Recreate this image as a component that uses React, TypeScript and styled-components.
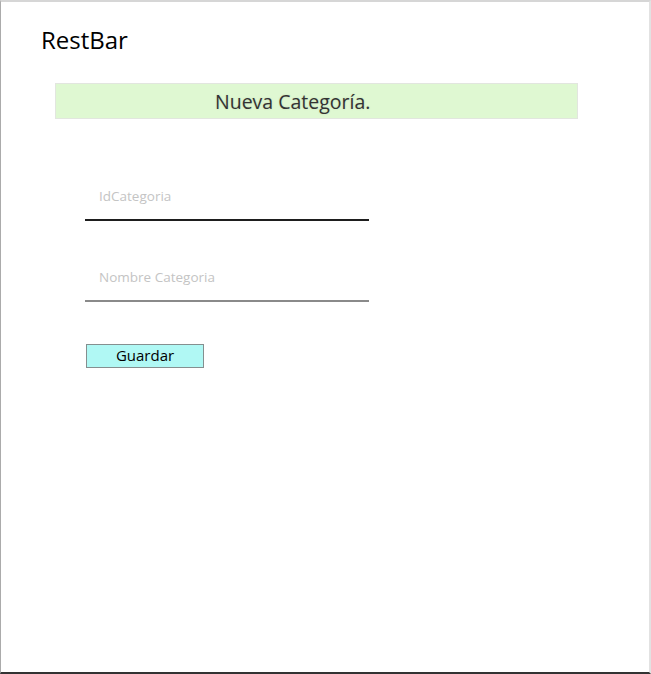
import React from 'react'
import styled, { createGlobalStyle } from 'styled-components'

const GlobalStyle = createGlobalStyle`
   html, body {
      margin: 0;
      padding: 0;
      background: #ffffff;
   }
   * {
      box-sizing: border-box;
   }
`

const fontStack = `'Open Sans', 'Noto Sans', 'Liberation Sans', sans-serif`

export default function App() {
   return (
      <>
         <GlobalStyle />
         <Frame>
            <Title>RestBar</Title>
            <Banner>
               <BannerText>Nueva Categoría.</BannerText>
            </Banner>
            <Form onSubmit={e => e.preventDefault()}>
               <Field placeholder="IdCategoria" $line="#1e1e1e" />
               <Field placeholder="Nombre Categoria" $line="#8a8a8a" />
               <SaveButton type="submit">Guardar</SaveButton>
            </Form>
         </Frame>
      </>
   )
}

const Frame = styled.div`
   width: 651px;
   height: 674px;
   border-top: 2px solid #d6d6d6;
   border-left: 1px solid #ababab;
   border-right: 2px solid #e2e2e2;
   border-bottom: 2px solid #333333;
   display: flex;
   flex-direction: column;
   font-family: ${fontStack};
`

const Title = styled.h1`
   margin: 22px 0 0 40px;
   font-size: 24px;
   font-weight: 400;
   line-height: 32px;
   color: #000;
`

const Banner = styled.div`
   margin: 27px 0 0 54px;
   width: 523px;
   height: 36px;
   background: #dff8d2;
   border: 1px solid #e2e6df;
   display: flex;
   align-items: center;
   padding-left: 159px;
`

const BannerText = styled.span`
   font-size: 19.5px;
   color: #333;
   text-shadow: 0 0 2px rgba(0, 0, 0, 0.15);
`

const Form = styled.form`
   display: flex;
   flex-direction: column;
   align-items: flex-start;
   margin: 64px 0 0 84px;
`

const Field = styled.input<{ $line: string }>`
   width: 284px;
   height: 38px;
   border: 0;
   border-bottom: 2px solid ${p => p.$line};
   padding: 0 14px 10px;
   margin-bottom: 43px;
   font-family: ${fontStack};
   font-size: 13.5px;
   outline: none;
   background: transparent;
   &::placeholder {
      color: #c4c4c4;
   }
`

const SaveButton = styled.button`
   margin: -1px 0 0 1px;
   width: 118px;
   height: 24px;
   background: #b0f8f4;
   border: 1px solid #858f8f;
   font-family: ${fontStack};
   font-size: 15px;
   color: #000;
   padding: 0 0 3px;
   line-height: 20px;
`
